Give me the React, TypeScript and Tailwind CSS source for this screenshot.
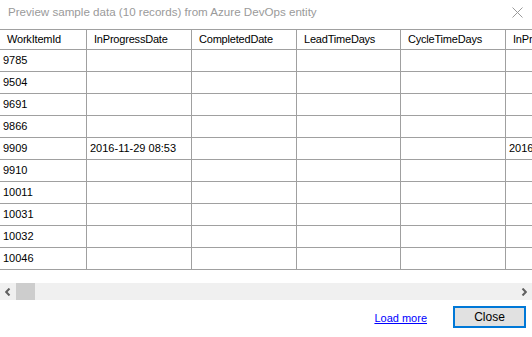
const headers = ["WorkItemId", "InProgressDate", "CompletedDate", "LeadTimeDays", "CycleTimeDays", "InProgressDate"];

const widths = ["w-[87px]", "w-[105px]", "w-[105px]", "w-[104px]", "w-[105px]", "w-[105px]"];

const rows: string[][] = [
  ["9785", "", "", "", "", ""],
  ["9504", "", "", "", "", ""],
  ["9691", "", "", "", "", ""],
  ["9866", "", "", "", "", ""],
  ["9909", "2016-11-29 08:53", "", "", "", "2016-11-29 08:53"],
  ["9910", "", "", "", "", ""],
  ["10011", "", "", "", "", ""],
  ["10031", "", "", "", "", ""],
  ["10032", "", "", "", "", ""],
  ["10046", "", "", "", "", ""],
];

const App = () => {
  return (
    <div className="w-[532px] h-[337px] bg-white overflow-hidden flex flex-col font-['Liberation_Sans',Arial,sans-serif] text-black">
      {/* title bar */}
      <div className="h-[29px] shrink-0 flex items-center justify-between pl-2 pr-[9px]">
        <span className="text-[11.6px] text-[#9a9a9a] -mt-[5px]">Preview sample data (10 records) from Azure DevOps entity</span>
        <svg width="11" height="11" viewBox="0 0 11 11" className="-mt-[5px]">
          <path d="M0.5 0.5 L10.5 10.5 M10.5 0.5 L0.5 10.5" stroke="#9a9a9a" strokeWidth="1" />
        </svg>
      </div>

      {/* grid */}
      <div className="h-[254px] shrink-0 border-t border-[#a0a0a0] overflow-hidden">
        <div className="flex h-[20px] border-b border-[#a0a0a0] w-[700px]">
          {headers.map((h, i) => (
            <div key={i} className={`${widths[i]} shrink-0 border-r border-[#a0a0a0] pl-[7px] text-[11px] tracking-[-0.2px] leading-[19px] whitespace-nowrap overflow-hidden`}>
              {h}
            </div>
          ))}
        </div>
        {rows.map((r, ri) => (
          <div key={ri} className="flex h-[22px] border-b border-[#a0a0a0] w-[700px]">
            {r.map((c, ci) => (
              <div key={ci} className={`${widths[ci]} shrink-0 border-r border-[#a0a0a0] pl-[3px] text-[11px] leading-[21px] whitespace-nowrap overflow-hidden`}>
                {c}
              </div>
            ))}
          </div>
        ))}
      </div>

      {/* horizontal scrollbar */}
      <div className="h-[17px] shrink-0 bg-[#f0f0f0] flex items-center">
        <div className="w-[16px] h-full flex items-center justify-center">
          <svg width="6" height="8" viewBox="0 0 6 8">
            <path d="M4.5 0.5 L1.2 4 L4.5 7.5" stroke="#606060" strokeWidth="2" fill="none" />
          </svg>
        </div>
        <div className="w-[19px] h-full bg-[#cdcdcd]" />
        <div className="flex-1" />
        <div className="w-[16px] h-full flex items-center justify-center">
          <svg width="6" height="8" viewBox="0 0 6 8">
            <path d="M1.5 0.5 L4.8 4 L1.5 7.5" stroke="#606060" strokeWidth="2" fill="none" />
          </svg>
        </div>
      </div>

      {/* footer */}
      <div className="flex items-start justify-end pt-[6px] pr-[6px]">
        <a href="#" className="text-[11px] text-[#0000ff] underline mt-[4px] mr-[26px]">Load more</a>
        <button className="w-[73px] h-[22px] border-2 border-[#0078d7] bg-[#e1e1e1] text-[12px] leading-[18px] text-black">
          Close
        </button>
      </div>
    </div>
  );
};

export default App;
